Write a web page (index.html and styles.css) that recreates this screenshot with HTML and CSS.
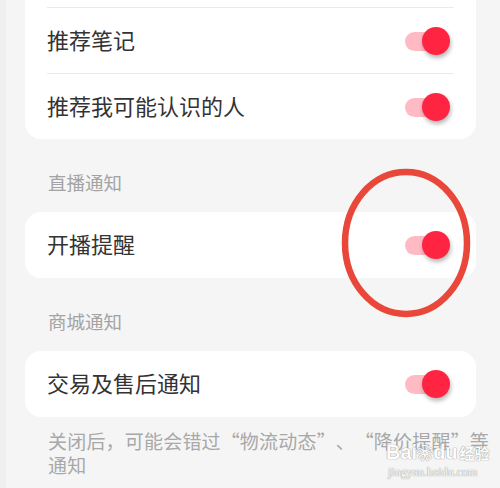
FILE: index.html
```html
<!DOCTYPE html>
<html lang="zh-CN">
<head>
<meta charset="utf-8">
<title>通知设置</title>
<link rel="stylesheet" href="styles.css">
</head>
<body>
<div class="page">
  <div class="card card-top">
    <div class="row">
      <span class="row-title">推荐笔记</span>
      <span class="switch on"><span class="track"></span><span class="knob"></span></span>
    </div>
    <div class="row">
      <span class="row-title">推荐我可能认识的人</span>
      <span class="switch on"><span class="track"></span><span class="knob"></span></span>
    </div>
  </div>

  <div class="section-label">直播通知</div>
  <div class="card">
    <div class="row">
      <span class="row-title">开播提醒</span>
      <span class="switch on"><span class="track"></span><span class="knob"></span></span>
    </div>
  </div>

  <div class="section-label">商城通知</div>
  <div class="card">
    <div class="row">
      <span class="row-title">交易及售后通知</span>
      <span class="switch on"><span class="track"></span><span class="knob"></span></span>
    </div>
  </div>

  <p class="footer-note">关闭后，可能会错过<span class="q-open">“</span>物流动态<span class="q-close">”</span>、<span class="q-open">“</span>降价提醒<span class="q-close">”</span>等通知</p>

  <svg class="mark-ellipse" width="140" height="160" viewBox="0 0 140 160">
    <ellipse cx="65" cy="78" rx="61" ry="71" fill="none" stroke="#e8473a" stroke-width="6.5"/>
  </svg>

  <div class="watermark">
    <div class="wm-logo">Bai<span class="wm-paw">&#x2740;</span>du<span class="wm-cn">经验</span></div>
    <div class="wm-url">jingyan.baidu.com</div>
  </div>
</div>
</body>
</html>
```

FILE: styles.css
```css
html, body {
  margin: 0;
  padding: 0;
}

body {
  background: #f5f5f5;
  font-family: "Noto Sans CJK SC", "Noto Sans", sans-serif;
  color: #333;
  width: 500px;
  height: 488px;
  overflow: hidden;
}

.page {
  position: relative;
  height: 488px;
  border-left: 6px solid #efefef;
  box-sizing: border-box;
}

.card {
  background: #fff;
  margin: 0 24px 0 19px;
  padding: 0 22px;
  border-radius: 16px;
}

.card-top {
  border-radius: 0 0 16px 16px;
  padding-top: 7px;
}

.row {
  display: flex;
  align-items: center;
  justify-content: space-between;
  height: 65px;
}

.card-top .row {
  border-top: 1px solid #ebebeb;
}

.card:not(.card-top) .row {
  height: 66px;
}

.row-title {
  font-size: 22px;
  line-height: 30px;
  padding-bottom: 4px;
  color: #333;
}

.switch {
  position: relative;
  display: block;
  width: 45px;
  height: 28px;
  margin-right: 4px;
}

.switch .track {
  position: absolute;
  left: 0;
  top: 5px;
  width: 38px;
  height: 19px;
  border-radius: 10px;
  background: #ffbac4;
}

.switch .knob {
  position: absolute;
  right: 0;
  top: 0;
  width: 28px;
  height: 28px;
  border-radius: 50%;
  background: #ff2442;
  box-shadow: 1px 3px 4px rgba(0, 0, 0, 0.28);
}

.section-label {
  padding: 30px 0 17px 42px;
  font-size: 18.5px;
  line-height: 26px;
  color: #a3a3a3;
}

.footer-note {
  margin: 0;
  padding: 12px 6px 0 42px;
  font-size: 19px;
  letter-spacing: 0.2px;
  line-height: 24px;
  color: #a8a8a8;
}

.q-open,
.q-close {
  display: inline-block;
  width: 1em;
}

.q-open {
  text-align: right;
}

.q-close {
  text-align: left;
}

.mark-ellipse {
  position: absolute;
  left: 335px;
  top: 165px;
}

.watermark {
  position: absolute;
  left: 380px;
  top: 441px;
  color: #fff;
  font-family: "Liberation Sans", sans-serif;
  text-shadow: 0 0 1px #8a8a8a, 0 0 1px #8a8a8a;
  opacity: 0.85;
}

.wm-logo {
  font-size: 20px;
  font-weight: bold;
  line-height: 22px;
}

.wm-paw {
  font-size: 16px;
}

.wm-cn {
  font-family: "Noto Sans CJK SC", sans-serif;
  font-size: 15px;
  margin-left: 2px;
}

.wm-url {
  font-family: "Liberation Serif", serif;
  font-size: 12px;
  line-height: 14px;
  margin-left: 2px;
}
```
